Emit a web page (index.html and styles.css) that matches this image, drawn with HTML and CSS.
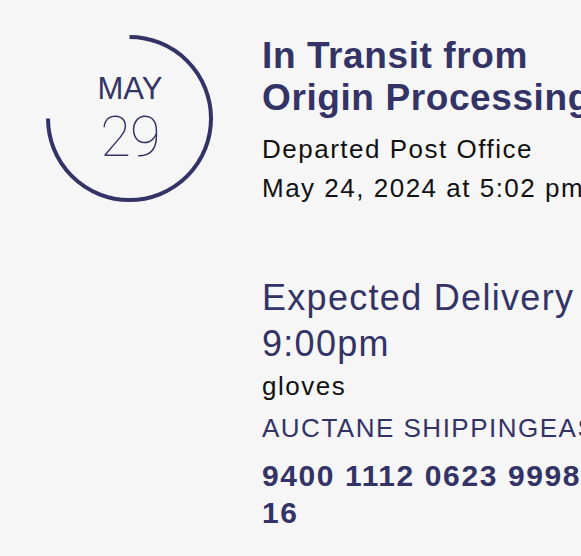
FILE: index.html
```html
<!DOCTYPE html>
<html lang="en">
<head>
<meta charset="utf-8">
<title>Tracking</title>
<link rel="stylesheet" href="styles.css">
</head>
<body>
<main class="status">
  <div class="date-badge">
    <svg class="ring" width="167" height="167" viewBox="0 0 167 167" aria-hidden="true">
      <path d="M83.5 2 A81.5 81.5 0 1 1 2 83.5" fill="none" stroke="#333366" stroke-width="4"/>
    </svg>
    <div class="date-text">
      <span class="month">MAY</span>
      <span class="day">29</span>
    </div>
  </div>
  <section class="details">
    <h1 class="headline">In Transit from Origin Processing</h1>
    <p class="event">Departed Post Office</p>
    <p class="event">May 24, 2024 at 5:02 pm</p>
    <h2 class="expected">Expected Delivery by<br>9:00pm</h2>
    <p class="item">gloves</p>
    <p class="sender">AUCTANE SHIPPINGEASY</p>
    <p class="tracking">9400 1112 0623 9998 7654<br>16</p>
  </section>
</main>
</body>
</html>
```
FILE: styles.css
```css
html, body {
  margin: 0;
  padding: 0;
  overflow: hidden;
  background: #f6f6f6;
}

body {
  font-family: "Liberation Sans", Arial, sans-serif;
  color: #111111;
}

.status {
  display: flex;
  align-items: flex-start;
  gap: 49px;
  padding: 35px 0 0 46px;
  width: 900px;
}

.date-badge {
  display: grid;
  width: 167px;
  height: 167px;
  flex: none;
}

.ring,
.date-text {
  grid-area: 1 / 1;
}

.ring {
  display: block;
}

.date-text {
  display: flex;
  flex-direction: column;
  align-items: center;
  padding-top: 38px;
  color: #333366;
}

.month {
  font-size: 31px;
  line-height: 31px;
  padding-left: 1px;
}

.day {
  font-family: Roboto, "Liberation Sans", sans-serif;
  font-weight: 100;
  font-size: 56px;
  line-height: 56px;
  margin-top: 5px;
  letter-spacing: -1px;
  padding-left: 1px;
}

.details {
  width: 380px;
  flex: none;
}

.headline {
  margin: 0;
  font-size: 37px;
  line-height: 42px;
  font-weight: bold;
  letter-spacing: 0.6px;
  color: #333366;
}

.event {
  margin: 0;
  font-size: 26px;
  line-height: 39px;
  letter-spacing: 1.5px;
}

.headline + .event {
  margin-top: 11px;
}

.expected {
  margin: 67px 0 0;
  font-size: 36px;
  line-height: 46px;
  font-weight: normal;
  letter-spacing: 1.3px;
  color: #333366;
  white-space: nowrap;
}

.item {
  margin: 0;
  font-size: 26px;
  line-height: 38px;
  letter-spacing: 1.5px;
}

.sender {
  margin: 4px 0 0;
  font-size: 26px;
  line-height: 38px;
  letter-spacing: 1.5px;
  color: #333366;
  white-space: nowrap;
}

.tracking {
  margin: 10px 0 0;
  font-size: 30px;
  line-height: 37px;
  font-weight: bold;
  letter-spacing: 1.6px;
  color: #333366;
  white-space: nowrap;
}
```
